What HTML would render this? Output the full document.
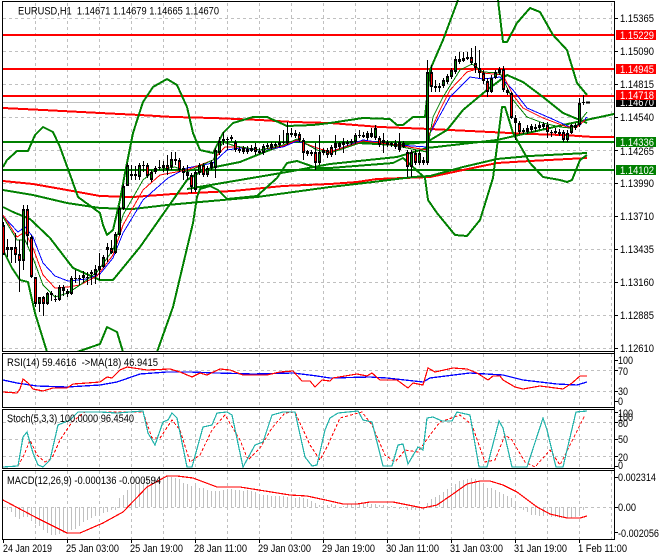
<!DOCTYPE html>
<html><head><meta charset="utf-8"><style>
html,body{margin:0;padding:0;background:#fff;width:660px;height:560px;overflow:hidden}
svg{display:block}
text{font-family:"Liberation Sans",sans-serif;font-size:11px;fill:#000}
path,line,polyline{fill:none}
</style></head><body>
<svg width="660" height="560" viewBox="0 0 660 560" shape-rendering="crispEdges" xmlns="http://www.w3.org/2000/svg">
<rect width="660" height="560" fill="#fff"/>
<!-- grid -->
<path stroke="#c0c0c0" stroke-dasharray="3 3" d="M35.5 3V351M67.5 3V351M99.5 3V351M131.5 3V351M163.5 3V351M195.5 3V351M227.5 3V351M259.5 3V351M291.5 3V351M323.5 3V351M355.5 3V351M387.5 3V351M419.5 3V351M451.5 3V351M483.5 3V351M515.5 3V351M547.5 3V351M579.5 3V351M611.5 3V351
M3 18.5H614M3 51.5H614M3 84.5H614M3 117.5H614M3 150.5H614M3 183.5H614M3 216.5H614M3 249.5H614M3 282.5H614M3 315.5H614M3 348.5H614
M35.5 354V407M67.5 354V407M99.5 354V407M131.5 354V407M163.5 354V407M195.5 354V407M227.5 354V407M259.5 354V407M291.5 354V407M323.5 354V407M355.5 354V407M387.5 354V407M419.5 354V407M451.5 354V407M483.5 354V407M515.5 354V407M547.5 354V407M579.5 354V407M611.5 354V407M3 370.5H614M3 391.5H614
M35.5 410V468M67.5 410V468M99.5 410V468M131.5 410V468M163.5 410V468M195.5 410V468M227.5 410V468M259.5 410V468M291.5 410V468M323.5 410V468M355.5 410V468M387.5 410V468M419.5 410V468M451.5 410V468M483.5 410V468M515.5 410V468M547.5 410V468M579.5 410V468M611.5 410V468M3 422.5H614M3 439.5H614M3 456.5H614
M35.5 471V539M67.5 471V539M99.5 471V539M131.5 471V539M163.5 471V539M195.5 471V539M227.5 471V539M259.5 471V539M291.5 471V539M323.5 471V539M355.5 471V539M387.5 471V539M419.5 471V539M451.5 471V539M483.5 471V539M515.5 471V539M547.5 471V539M579.5 471V539M611.5 471V539M3 507.5H614"/>
<!-- current price line -->
<path stroke="#c0c0c0" d="M3 102.5H614"/>
<clipPath id="m"><rect x="3" y="0" width="611" height="351"/></clipPath>
<g clip-path="url(#m)" stroke-linejoin="round">
<!-- horizontal levels -->
<path stroke="#f00" stroke-width="2" d="M3 35H614M3 69H614M3 96H614"/>
<path stroke="#008000" stroke-width="2" d="M3 142H614M3 170H614"/>
<!-- MA red lines -->
<polyline stroke="#f00" stroke-width="2" points="3,108 43,110 100,113 140,115 173,117 213,118 260,120 293,122 330,123 380,127 430,129 490,132 530,134 563,135 593,137 614,137"/>
<polyline stroke="#f00" stroke-width="2" points="3,181 33,184 67,190 100,196 133,197 173,194 233,191 283,186 330,184 357,182 377,179 430,177 463,170 497,163 530,161 587,158"/>
<!-- slow green lines -->
<polyline stroke="#008000" stroke-width="2" points="3,190 33,195 67,203 100,208 133,209 167,205 200,202 257,197 330,187 373,182 413,177 430,176 463,167 497,159 530,156 587,153"/>
<polyline stroke="#008000" stroke-width="2" points="187,189 287,172 330,164 397,157 427,148 497,140 563,125 614,114"/>
<!-- bollinger upper -->
<polyline stroke="#008000" stroke-width="2" points="3,167 7,160 17,151 28,151 35,135 43,127 53,132 60,147 72,180 73,183 78,197 100,213 103,225 107,235 113,230 120,200 125,173 133,133 143,102 153,87 167,79 177,85 187,107 193,133 200,150 213,153 223,133 233,123 253,117 267,117 287,126 313,125 330,123 363,118 390,119 397,125 403,125 413,117 425,117 430,70 443,40 458,0"/>
<polyline stroke="#008000" stroke-width="2" points="498,0 503,42 507,42 517,23 530,8 540,12 553,35 567,50 577,83 587,95"/>
<!-- bollinger middle -->
<polyline stroke="#008000" stroke-width="2" points="3,207 13,212 30,219 50,238 73,268 100,280 113,280 140,247 187,180 200,172 215,167 240,162 267,151 293,142 330,142 357,143 397,145 427,142 447,130 463,110 487,90 507,75 523,82 543,97 563,113 587,123"/>
<!-- bollinger lower -->
<polyline stroke="#008000" stroke-width="2" points="3,250 12,268 20,280 28,282 35,313 47,352"/>
<polyline stroke="#008000" stroke-width="2" points="77,352 100,344 107,327 117,332 123,352"/>
<polyline stroke="#008000" stroke-width="2" points="157,352 173,307 193,223 197,197 200,189 210,186 218,190 227,199 257,196 277,178 287,163 297,161 317,168 330,168 393,163 403,158 413,167 425,178 428,200 437,213 455,235 467,236 480,220 493,178 502,107 505,107 513,133 530,163 543,177 560,180 567,182 572,180 580,160 587,155"/>
<!-- thin MAs -->
<polyline stroke="#00f" points="3,216 18,232 25,227 33,237 43,263 55,276 68,281 87,279 100,274 113,258 123,233 143,200 168,178 187,168 213,163 227,150 240,148 260,150 283,147 297,141 317,148 330,152 363,140 397,145 427,147 428,137 450,97 470,77 483,79 500,77 513,90 527,108 550,118 570,127 580,125 587,117"/>
<polyline stroke="#f00" points="3,215 17,237 25,232 33,248 43,275 55,288 68,287 80,285 97,276 113,255 123,225 143,190 160,175 187,170 213,160 225,147 240,147 260,150 283,146 297,140 317,148 330,152 363,141 397,145 427,150 428,137 440,110 450,90 467,72 477,69 483,73 503,75 513,95 523,108 543,118 567,127 577,127 585,120"/>
<polyline stroke="#008000" points="3,217 17,240 25,240 33,258 43,285 55,297 68,293 80,285 97,272 113,250 123,215 143,180 155,170 175,167 187,172 213,160 223,142 235,146 260,150 283,145 297,139 317,150 330,153 363,142 397,146 427,152 433,117 443,97 460,70 472,64 483,72 500,73 513,100 527,117 543,123 560,127 570,128 577,125 587,112"/>
<!-- wicks -->
<path stroke="#000" d="M3.5 222V255M7.5 239V257M11.5 247V263M15.5 233V263M19.5 240V292M23.5 205V270M27.5 205V245M31.5 235V278M35.5 277V307M39.5 297V312M43.5 296V316M47.5 292V305M51.5 291V301M55.5 295V302M59.5 285V301M63.5 285V296M67.5 289V297M71.5 276V295M75.5 270V283M79.5 275V285M83.5 271V283M87.5 272V285M91.5 270V285M95.5 265V284M99.5 253V280M103.5 255V268M107.5 243V262M111.5 240V254M115.5 232V254M119.5 206V236M123.5 184V210M127.5 163V186M131.5 165V180M135.5 166V180M139.5 163V180M143.5 161V172M147.5 163V178M151.5 170V182M155.5 166V174M159.5 160V170M163.5 161V172M167.5 155V175M171.5 152V170M175.5 152V165M179.5 158V172M183.5 166V180M187.5 165V180M191.5 173V193M195.5 170V192M199.5 163V175M203.5 163V177M207.5 166V177M211.5 160V170M215.5 148V178M219.5 137V155M223.5 132V145M227.5 137V150M231.5 135V141M235.5 140V152M239.5 147V153M243.5 146V154M247.5 146V154M251.5 145V152M255.5 143V155M259.5 148V154M263.5 144V155M267.5 143V149M271.5 142V150M275.5 142V148M279.5 135V147M283.5 130V144M287.5 122V145M291.5 128V137M295.5 130V138M299.5 132V142M303.5 138V160M307.5 150V156M311.5 150V156M315.5 143V170M319.5 135V165M323.5 148V155M327.5 148V158M331.5 145V157M335.5 135V155M339.5 142V149M343.5 138V153M347.5 140V146M351.5 139V145M355.5 133V144M359.5 130V138M363.5 132V138M367.5 131V140M371.5 128V138M375.5 125V140M379.5 136V147M383.5 133V153M387.5 140V147M391.5 142V147M395.5 140V149M399.5 133V152M403.5 141V148M407.5 150V177M411.5 150V177M415.5 150V165M419.5 150V165M423.5 157V165M427.5 60V165M431.5 65V92M435.5 80V92M439.5 83V92M443.5 78V88M447.5 74V84M451.5 68V79M455.5 56V74M459.5 52V64M463.5 52V62M467.5 52V60M471.5 48V65M475.5 46V73M479.5 50V78M483.5 70V84M487.5 78V97M491.5 75V93M495.5 70V79M499.5 67V75M503.5 66V92M507.5 88V95M511.5 92V119M515.5 115V140M519.5 121V134M523.5 128V134M527.5 125V134M531.5 124V132M535.5 124V132M539.5 122V130M543.5 122V129M547.5 122V138M551.5 130V137M555.5 128V134M559.5 129V136M563.5 130V142M567.5 130V142M571.5 124V134M575.5 123V130M579.5 98V127M583.5 95V105"/>
<!-- bodies -->
<g stroke-width="3">
<path stroke="#000" d="M23.5 209V261M39.5 297V304M47.5 293V304M59.5 287V300M71.5 278V294M95.5 269V275M103.5 257V267M115.5 234V253M119.5 208V235M123.5 186V209M127.5 165V186M139.5 165V177M151.5 172V180M171.5 159V167M195.5 172V190M199.5 165V173M207.5 168V175M215.5 150V168M219.5 141V153M263.5 146V153M287.5 133V143M319.5 152V163M355.5 135V142M375.5 128V138M411.5 152V167M419.5 153V163M427.5 72V163M443.5 80V86M447.5 76V82M451.5 70V77M455.5 59V72M491.5 78V92M495.5 72V78M531.5 126V130M571.5 125V133M567.5 133V140M579.5 103V125"/>
<path stroke="#000" d="M3.5 225V255M15.5 247V255M19.5 254V261M27.5 209V236M31.5 237V277M35.5 277V304M43.5 297V304M63.5 287V291M67.5 291V294M99.5 266V270M111.5 248V253M147.5 165V176M167.5 165V170M179.5 160V170M183.5 168V173M191.5 175V187M203.5 165V175M235.5 142V150M243.5 148V152M255.5 147V152M299.5 134V140M303.5 140V153M315.5 152V163M327.5 150V155M331.5 147V155M379.5 138V145M407.5 152V167M415.5 153V163M431.5 72V87M471.5 57V63M475.5 63V68M479.5 68V73M483.5 73V81M487.5 81V92M503.5 69V90M511.5 93V118M519.5 123V132M547.5 125V132M563.5 132V140"/>
<path stroke="#000" d="M7.5 247V250M11.5 247V250M51.5 293V295M55.5 299V300M75.5 278V279M79.5 278V279M83.5 275V278M87.5 277V278M91.5 272V274M107.5 247V250M131.5 174V176M135.5 174V176M143.5 165V166M155.5 168V172M159.5 167V168M163.5 165V168M175.5 159V161M187.5 172V176M211.5 162V168M223.5 139V141M227.5 139V140M231.5 137V139M239.5 149V151M247.5 149V152M251.5 148V151M259.5 151V153M267.5 145V147M271.5 144V148M275.5 144V146M279.5 142V145M283.5 142V143M291.5 133V135M295.5 133V136M307.5 151V154M311.5 152V154M323.5 150V153M335.5 143V148M339.5 143V147M343.5 142V145M347.5 142V144M351.5 141V143M359.5 135V136M363.5 135V137M367.5 133V138M371.5 133V137M383.5 140V143M387.5 142V145M391.5 143V145M395.5 143V147M399.5 142V150M403.5 143V147M423.5 160V163M435.5 86V88M439.5 86V88M459.5 59V62M463.5 58V61M467.5 57V59M499.5 69V73M507.5 90V93M515.5 118V123M523.5 130V132M527.5 128V132M535.5 127V129M539.5 125V128M543.5 124V127M551.5 132V133M555.5 131V133M559.5 132V134M575.5 125V128M583.5 102V103"/>
<path stroke="#008000" stroke-width="1" d="M23.5 211V259M39.5 299V302M47.5 295V302M59.5 289V298M71.5 280V292M95.5 271V273M103.5 259V265M115.5 236V251M119.5 210V233M123.5 188V207M127.5 167V184M139.5 167V175M151.5 174V178M171.5 161V165M195.5 174V188M199.5 167V171M207.5 170V173M215.5 152V166M219.5 143V151M263.5 148V151M287.5 135V141M319.5 154V161M355.5 137V140M375.5 130V136M411.5 154V165M419.5 155V161M427.5 74V161M443.5 82V84M447.5 78V80M451.5 72V75M455.5 61V70M491.5 80V90M495.5 74V76M531.5 128V128M571.5 127V131M567.5 135V138M579.5 105V123"/>
<path stroke="#f00" stroke-width="1" d="M3.5 227V253M15.5 249V253M19.5 256V259M27.5 211V234M31.5 239V275M35.5 279V302M43.5 299V302M63.5 289V289M99.5 268V268M111.5 250V251M147.5 167V174M167.5 167V168M179.5 162V168M183.5 170V171M191.5 177V185M203.5 167V173M235.5 144V148M243.5 150V150M255.5 149V150M299.5 136V138M303.5 142V151M315.5 154V161M327.5 152V153M331.5 149V153M379.5 140V143M407.5 154V165M415.5 155V161M431.5 74V85M471.5 59V61M475.5 65V66M479.5 70V71M483.5 75V79M487.5 83V90M503.5 71V88M511.5 95V116M519.5 125V130M547.5 127V130M563.5 134V138"/>
</g>
<path stroke="#000" stroke-width="2" d="M586 102.5H590"/>
</g>
<!-- RSI -->
<polyline stroke="#00f" stroke-width="1.3" points="3,380 17,383 37,386 67,387 100,385 117,382 140,374 167,372 190,372 217,373 253,374 293,373 317,376 330,378 370,377 387,378 423,382 430,378 470,373 503,375 523,380 557,384 577,385 587,382"/>
<polyline stroke="#f00" stroke-width="1.2" points="3,392 17,393 20,389 23,379 28,383 33,389 43,391 53,388 67,388 73,384 87,383 100,382 107,377 112,378 120,370 127,367 147,370 170,369 180,372 192,377 200,373 207,375 220,369 230,370 243,375 267,375 280,372 293,371 302,381 310,381 315,387 322,380 330,381 333,378 357,374 367,376 372,373 380,380 397,380 408,388 413,383 423,385 428,368 435,372 453,368 467,369 477,373 488,380 493,376 500,376 503,380 515,387 523,389 540,386 563,389 572,383 580,376 587,376"/>
<!-- Stoch -->
<polyline stroke="#f00" stroke-dasharray="3 2" points="3,467 18,466 24,455 30,440 37,455 45,462 52,458 60,440 72,422 85,412 143,412 152,438 160,438 172,420 180,430 190,462 200,455 212,430 225,415 240,440 248,460 260,448 272,428 285,413 295,412 310,445 320,460 328,445 340,418 362,412 372,425 385,455 395,462 405,450 418,452 430,435 440,422 460,415 472,425 485,462 495,460 505,435 512,440 525,462 535,467 550,450 560,465 570,445 585,415"/>
<polyline stroke="#20b2aa" stroke-width="1.2" points="3,467 18,466 23,437 27,432 33,453 38,465 43,467 50,460 58,425 70,420 78,412 100,412 117,413 143,411 148,433 155,445 163,422 168,420 172,413 177,418 187,467 192,467 203,427 212,425 217,413 227,412 232,415 243,467 255,445 263,442 272,415 283,412 295,412 305,457 312,466 317,465 325,430 330,418 338,413 358,411 363,420 372,422 383,466 392,466 398,445 403,444 408,464 418,447 423,450 427,418 433,417 442,421 452,421 457,412 470,415 479,467 487,467 499,421 503,428 512,467 527,467 543,418 547,430 556,467 563,467 576,412 587,411"/>
<!-- MACD hist -->
<path stroke="#c0c0c0" d="M7.5 507V510M11.5 507V512M15.5 507V517M19.5 507V519M23.5 507V517M27.5 507V517M31.5 507V521M35.5 507V524M39.5 507V526M43.5 507V530M47.5 507V533M51.5 507V535M55.5 507V535M59.5 507V534M63.5 507V533M67.5 507V531M71.5 507V530M75.5 507V529M79.5 507V526M83.5 507V522M87.5 507V520M91.5 507V518M95.5 507V516M99.5 507V514M103.5 507V513M107.5 507V512M111.5 507V510M115.5 507V510M119.5 507V498M123.5 507V495M127.5 507V490M131.5 507V486M135.5 507V484M139.5 507V482M143.5 507V479M147.5 507V478M151.5 507V477M155.5 507V477M159.5 507V476M163.5 507V476M167.5 507V476M171.5 507V477M175.5 507V478M179.5 507V479M183.5 507V483M187.5 507V484M191.5 507V486M195.5 507V486M199.5 507V488M203.5 507V488M207.5 507V490M211.5 507V491M215.5 507V491M219.5 507V491M223.5 507V490M227.5 507V489M231.5 507V489M235.5 507V490M239.5 507V490M243.5 507V491M247.5 507V490M251.5 507V491M255.5 507V492M259.5 507V494M263.5 507V495M267.5 507V495M271.5 507V496M275.5 507V496M279.5 507V496M283.5 507V496M287.5 507V497M291.5 507V497M295.5 507V498M299.5 507V497M303.5 507V498M307.5 507V499M311.5 507V501M315.5 507V503M319.5 507V505M323.5 507V505M327.5 507V505M331.5 507V504M335.5 507V505M343.5 507V506M347.5 507V504M351.5 507V504M355.5 507V503M359.5 507V503M363.5 507V503M367.5 507V503M371.5 507V504M375.5 507V504M379.5 507V505M383.5 507V505M387.5 507V506M391.5 507V506M399.5 507V509M403.5 507V508M407.5 507V510M411.5 507V510M415.5 507V510M419.5 507V511M423.5 507V510M427.5 507V503M431.5 507V499M435.5 507V497M439.5 507V495M443.5 507V492M447.5 507V489M451.5 507V487M455.5 507V484M459.5 507V481M463.5 507V480M467.5 507V479M471.5 507V478M475.5 507V479M479.5 507V482M483.5 507V484M487.5 507V488M491.5 507V488M495.5 507V490M499.5 507V492M503.5 507V494M507.5 507V496M511.5 507V498M515.5 507V504M523.5 507V510M527.5 507V512M531.5 507V515M535.5 507V515M539.5 507V516M543.5 507V516M547.5 507V516M551.5 507V517M555.5 507V517M559.5 507V518M563.5 507V518M567.5 507V518M571.5 507V518M575.5 507V517M579.5 507V514M583.5 507V510M587.5 507V508"/>
<polyline stroke="#f00" stroke-width="1.2" points="3,500 37,518 67,533 80,533 103,523 123,512 147,487 167,476 177,476 193,478 217,487 240,487 290,495 307,496 330,501 343,504 357,504 370,502 393,502 423,508 437,505 453,494 467,484 480,481 490,481 503,485 517,492 537,507 550,514 567,518 580,518 587,516"/>
<!-- frames -->
<path stroke="#000" d="M2.5 1V351M2.5 353V407M2.5 409V468M2.5 470V539M614.5 1V540M2 1.5H615M2 351.5H615M2 353.5H615M2 407.5H615M2 409.5H615M2 468.5H615M2 470.5H615M2 539.5H615
M614 18.5h4M614 51.5h4M614 84.5h4M614 117.5h4M614 150.5h4M614 183.5h4M614 216.5h4M614 249.5h4M614 282.5h4M614 315.5h4M614 348.5h4M614 360.5h4M614 370.5h4M614 391.5h4M614 401.5h4M614 412.5h4M614 422.5h4M614 439.5h4M614 456.5h4M614 466.5h4M614 477.5h4M614 507.5h4M614 532.5h4
M3.5 539v4M67.5 539v4M131.5 539v4M195.5 539v4M259.5 539v4M323.5 539v4M387.5 539v4M451.5 539v4M515.5 539v4M579.5 539v4"/>
<!-- labels -->
<rect x="616" y="30" width="40" height="10" fill="#f00"/>
<rect x="616" y="64" width="40" height="10" fill="#f00"/>
<rect x="616" y="98" width="40" height="9" fill="#000"/>
<text x="620" y="106" textLength="34" lengthAdjust="spacingAndGlyphs" style="fill:#fff">1.14670</text>
<rect x="616" y="90" width="40" height="10" fill="#f00"/>
<rect x="616" y="137" width="40" height="10" fill="#008000"/>
<rect x="616" y="165" width="40" height="10" fill="#008000"/>
<path fill="#000" d="M6 8.5h7l-3.5 4z"/>
<text x="18" y="14.5" textLength="201" lengthAdjust="spacingAndGlyphs" xml:space="preserve">EURUSD,H1  1.14671 1.14679 1.14665 1.14670</text>
<text x="620" y="22" textLength="34" lengthAdjust="spacingAndGlyphs">1.15365</text>
<text x="620" y="39" textLength="34" lengthAdjust="spacingAndGlyphs" style="fill:#fff">1.15229</text>
<text x="620" y="55" textLength="34" lengthAdjust="spacingAndGlyphs">1.15090</text>
<text x="620" y="73" textLength="34" lengthAdjust="spacingAndGlyphs" style="fill:#fff">1.14945</text>
<text x="620" y="88" textLength="34" lengthAdjust="spacingAndGlyphs">1.14815</text>
<text x="620" y="99" textLength="34" lengthAdjust="spacingAndGlyphs" style="fill:#fff">1.14718</text>
<text x="620" y="121" textLength="34" lengthAdjust="spacingAndGlyphs">1.14540</text>
<text x="620" y="146" textLength="34" lengthAdjust="spacingAndGlyphs" style="fill:#fff">1.14336</text>
<text x="620" y="155" textLength="34" lengthAdjust="spacingAndGlyphs">1.14265</text>
<text x="620" y="174" textLength="34" lengthAdjust="spacingAndGlyphs" style="fill:#fff">1.14102</text>
<text x="620" y="187" textLength="34" lengthAdjust="spacingAndGlyphs">1.13990</text>
<text x="620" y="220" textLength="34" lengthAdjust="spacingAndGlyphs">1.13710</text>
<text x="620" y="253" textLength="34" lengthAdjust="spacingAndGlyphs">1.13435</text>
<text x="620" y="286" textLength="34" lengthAdjust="spacingAndGlyphs">1.13160</text>
<text x="620" y="319" textLength="34" lengthAdjust="spacingAndGlyphs">1.12885</text>
<text x="620" y="352" textLength="34" lengthAdjust="spacingAndGlyphs">1.12610</text>
<text x="618" y="364" textLength="15" lengthAdjust="spacingAndGlyphs">100</text>
<text x="618" y="375" textLength="10" lengthAdjust="spacingAndGlyphs">70</text>
<text x="618" y="395" textLength="10" lengthAdjust="spacingAndGlyphs">30</text>
<text x="618" y="405" textLength="5" lengthAdjust="spacingAndGlyphs">0</text>
<text x="618" y="417" textLength="15" lengthAdjust="spacingAndGlyphs">100</text>
<text x="618" y="421" textLength="15" lengthAdjust="spacingAndGlyphs">100</text>
<text x="618" y="427" textLength="10" lengthAdjust="spacingAndGlyphs">80</text>
<text x="618" y="443" textLength="10" lengthAdjust="spacingAndGlyphs">50</text>
<text x="618" y="461" textLength="10" lengthAdjust="spacingAndGlyphs">20</text>
<text x="618" y="469" textLength="5" lengthAdjust="spacingAndGlyphs">0</text>
<text x="618" y="481" textLength="38" lengthAdjust="spacingAndGlyphs">0.002314</text>
<text x="618" y="511" textLength="18" lengthAdjust="spacingAndGlyphs">0.00</text>
<text x="618" y="537" textLength="41" lengthAdjust="spacingAndGlyphs">-0.002056</text>
<text x="7" y="366" textLength="151" lengthAdjust="spacingAndGlyphs" xml:space="preserve">RSI(14) 59.4616  -&gt;MA(18) 46.9415</text>
<text x="7" y="422" textLength="127" lengthAdjust="spacingAndGlyphs">Stoch(5,3,3) 100.0000 96.4540</text>
<text x="7" y="484" textLength="154" lengthAdjust="spacingAndGlyphs">MACD(12,26,9) -0.000136 -0.000594</text>
<text x="3" y="552" textLength="49" lengthAdjust="spacingAndGlyphs">24 Jan 2019</text>
<text x="66" y="552" textLength="53" lengthAdjust="spacingAndGlyphs">25 Jan 03:00</text>
<text x="130" y="552" textLength="53" lengthAdjust="spacingAndGlyphs">25 Jan 19:00</text>
<text x="194" y="552" textLength="53" lengthAdjust="spacingAndGlyphs">28 Jan 11:00</text>
<text x="258" y="552" textLength="53" lengthAdjust="spacingAndGlyphs">29 Jan 03:00</text>
<text x="322" y="552" textLength="53" lengthAdjust="spacingAndGlyphs">29 Jan 19:00</text>
<text x="386" y="552" textLength="53" lengthAdjust="spacingAndGlyphs">30 Jan 11:00</text>
<text x="450" y="552" textLength="53" lengthAdjust="spacingAndGlyphs">31 Jan 03:00</text>
<text x="514" y="552" textLength="53" lengthAdjust="spacingAndGlyphs">31 Jan 19:00</text>
<text x="578" y="552" textLength="49" lengthAdjust="spacingAndGlyphs">1 Feb 11:00</text>
</svg>
</body></html>
